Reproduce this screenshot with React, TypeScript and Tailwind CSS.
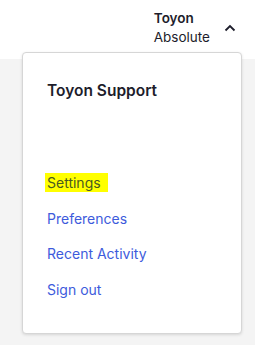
const App = () => {
  return (
    <div className="w-[255px] h-[345px] bg-[#f4f4f4] relative overflow-hidden" style={{ fontFamily: "Inter, sans-serif" }}>
      {/* Header */}
      <header className="h-[59px] bg-white flex justify-end items-center pr-[19px]">
        <div className="flex flex-col leading-[19px] text-[13.5px] text-[#1d1d2b] mr-[14px] -mt-[4px]">
          <span className="font-semibold">Toyon</span>
          <span>Absolute</span>
        </div>
        <svg width="12" height="8" viewBox="0 0 12 8" fill="none" className="-mt-[3px]">
          <path d="M1.5 6.5 L6 2 L10.5 6.5" stroke="#1d1d2b" strokeWidth="1.8" />
        </svg>
      </header>

      {/* Dropdown */}
      <div className="absolute left-[22px] top-[52px] w-[220px] h-[282px] bg-white border border-[#d6d6d6] rounded-[4px] shadow-[0_1px_3px_rgba(0,0,0,0.12)] pl-[24px] pt-[28px]">
        <h3 className="text-[15.5px] font-semibold text-[#1d1d2b] leading-[20px]">Toyon Support</h3>
        <ul className="mt-[72px] flex flex-col gap-[15.6px] text-[14px] leading-[20px] text-[#3d5bdc]">
          <li>
            <span className="bg-[#ffff00] text-[#4a5a20] pl-[2px] pr-[7px] -ml-[2px] py-[1px]">Settings</span>
          </li>
          <li>Preferences</li>
          <li>Recent Activity</li>
          <li>Sign out</li>
        </ul>
      </div>
    </div>
  );
};

export default App;
